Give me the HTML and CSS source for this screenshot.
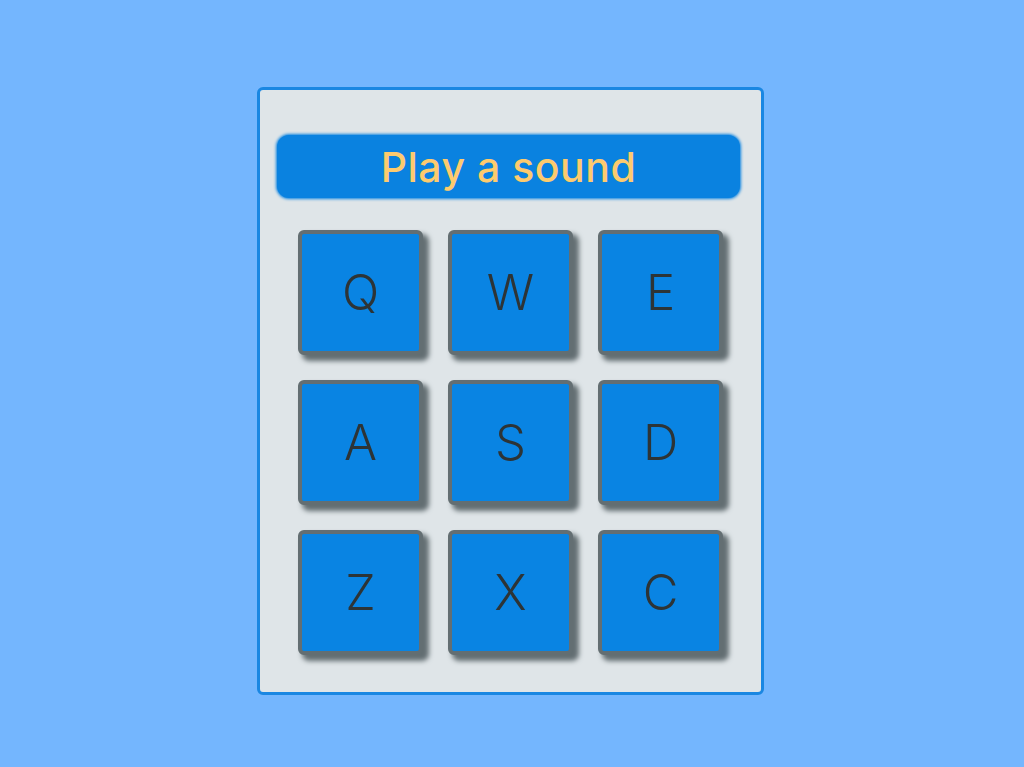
FILE: index.html
```html
<!DOCTYPE html>
<html>
<head>
<meta charset="utf-8">
<link rel="stylesheet" href="styles.css">
</head>
<body>
<div class="page">
  <div class="panel">
    <div class="title">Play a sound</div>
    <div class="keys">
      <div class="key">Q</div>
      <div class="key">W</div>
      <div class="key">E</div>
      <div class="key">A</div>
      <div class="key">S</div>
      <div class="key">D</div>
      <div class="key">Z</div>
      <div class="key">X</div>
      <div class="key">C</div>
    </div>
  </div>
</div>
</body>
</html>
```
FILE: styles.css
```css
html, body {
  margin: 0;
  padding: 0;
  background: #74b6fe;
  font-family: "Inter", "Noto Sans", sans-serif;
}
.page {
  height: 767px;
  display: flex;
  justify-content: center;
  align-items: flex-start;
  padding-top: 87px;
  box-sizing: border-box;
}
.panel {
  width: 507px;
  height: 608px;
  box-sizing: border-box;
  background: #dfe5e8;
  border: 3px solid #1a87e2;
  border-radius: 6px;
  padding: 45px 21px 0 17px;
  margin-left: -3px;
}
.title {
  height: 63px;
  border-radius: 12px;
  background: #0a82e0;
  box-shadow: 0 0 3px 1px #0a82e0;
  color: #fdcb6e;
  font-size: 41px;
  font-weight: 500;
  letter-spacing: 0.5px;
  display: flex;
  align-items: center;
  justify-content: center;
}
.keys {
  margin-top: 32px;
  margin-left: 21px;
  display: grid;
  grid-template-columns: repeat(3, 125px);
  grid-auto-rows: 125px;
  gap: 25px;
  justify-content: start;
}
.key {
  box-sizing: border-box;
  border: 4px solid #636e72;
  border-radius: 6px;
  background: #0984e3;
  box-shadow: 5px 5px 5px 1px #636e72;
  color: #2d3436;
  font-size: 49px;
  font-weight: 300;
  display: flex;
  align-items: center;
  justify-content: center;
}
```
